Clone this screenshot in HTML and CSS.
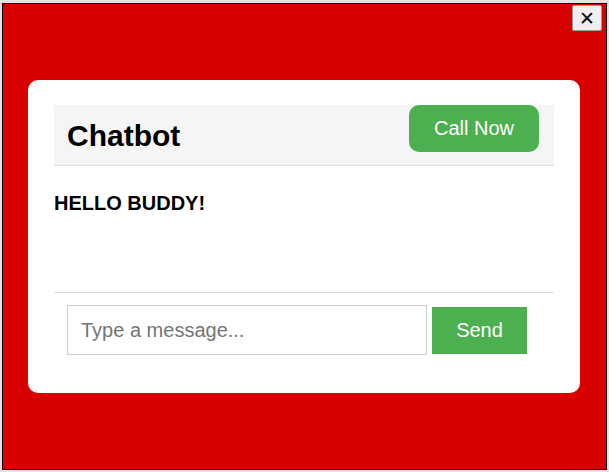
FILE: index.html
```html
<!DOCTYPE html>
<html>
<head>
<meta charset="utf-8">
<link rel="stylesheet" href="styles.css">
</head>
<body>
<div class="frame">
  <button class="close">✕</button>
  <div class="card">
    <div class="header">
      <h2 class="title">Chatbot</h2>
      <button class="call">Call Now</button>
    </div>
    <div class="messages">
      <p class="msg">HELLO BUDDY!</p>
    </div>
    <div class="input-area">
      <input class="input" type="text" placeholder="Type a message...">
      <button class="send">Send</button>
    </div>
  </div>
</div>
</body>
</html>
```
FILE: styles.css
```css
html, body {
  margin: 0;
  padding: 0;
}
body {
  background: #e3e3e3;
  font-family: "Liberation Sans", Arial, sans-serif;
  padding: 3px 2px 2px 2px;
  box-sizing: border-box;
  height: 472px;
}
.frame {
  position: relative;
  box-sizing: border-box;
  width: 605px;
  height: 467px;
  border: 1px solid #000;
  background: #d90000;
  display: flex;
  align-items: center;
  justify-content: center;
}
.close {
  position: absolute;
  top: 1px;
  right: 4px;
  width: 30px;
  height: 26px;
  padding: 0;
  background: #efefef;
  border: 1px solid #9a9a9a;
  border-radius: 2px;
  font-family: "DejaVu Sans", sans-serif;
  font-size: 19px;
  font-weight: bold;
  color: #000;
  line-height: 1;
}
.card {
  box-sizing: border-box;
  width: 552px;
  height: 313px;
  margin: 0 1px 0 0;
  background: #fff;
  border-radius: 10px;
  padding: 25px 26px;
  display: flex;
  flex-direction: column;
}
.header {
  height: 60px;
  background: #f5f5f5;
  border-bottom: 1px solid #ddd;
  display: flex;
  justify-content: space-between;
  align-items: flex-start;
  padding: 0 15px 0 13px;
}
.title {
  margin: 0;
  align-self: center;
  font-size: 30px;
  font-weight: bold;
  color: #000;
  padding-top: 2px;
}
.call {
  width: 130px;
  height: 47px;
  background: #4caf50;
  color: #fff;
  border: none;
  border-radius: 10px;
  font-family: "Liberation Sans", Arial, sans-serif;
  font-size: 20px;
  padding: 0;
}
.messages {
  height: 126px;
  border-bottom: 1px solid #ddd;
  box-sizing: content-box;
}
.msg {
  margin: 0;
  padding-top: 26px;
  font-size: 20px;
  font-weight: bold;
  color: #000;
}
.input-area {
  display: flex;
  align-items: center;
  gap: 5px;
  padding: 12px 13px 0 13px;
}
.input {
  box-sizing: border-box;
  width: 360px;
  height: 50px;
  border: 1px solid #ccc;
  padding: 0 13px;
  font-family: "Liberation Sans", Arial, sans-serif;
  font-size: 20px;
  margin: 0;
  outline: none;
}
.input::placeholder {
  color: #757575;
}
.send {
  width: 95px;
  height: 47px;
  background: #4caf50;
  color: #fff;
  border: none;
  border-radius: 0;
  font-family: "Liberation Sans", Arial, sans-serif;
  font-size: 20px;
  padding: 0;
}
```
